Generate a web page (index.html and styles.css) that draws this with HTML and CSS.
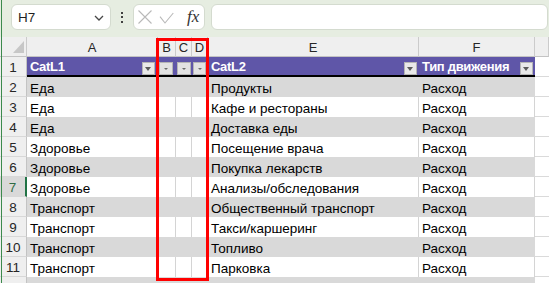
FILE: index.html
```html
<!DOCTYPE html>
<html lang="ru">
<head>
<meta charset="utf-8">
<title>Sheet</title>
<link rel="stylesheet" href="styles.css">
</head>
<body>
<div class="app">
  <div class="toolbar">
    <div class="namebox"><span>H7</span>
      <svg class="chev" width="10" height="6" viewBox="0 0 10 6"><path d="M1 1 L5 5 L9 1" fill="none" stroke="#474747" stroke-width="1.3"/></svg>
    </div>
    <div class="dots"><i></i><i></i><i></i></div>
    <div class="fxbox">
      <svg class="ico-x" width="14" height="14" viewBox="0 0 14 14"><path d="M0.5 0.5 L13.5 13.5 M13.5 0.5 L0.5 13.5" fill="none" stroke="#b9b9b9" stroke-width="1.1"/></svg>
      <svg class="ico-ok" width="15" height="12" viewBox="0 0 15 12"><path d="M1 4.7 L6 11 L14.3 1" fill="none" stroke="#b9b9b9" stroke-width="1.1"/></svg>
      <span class="fx">fx</span>
    </div>
    <div class="formula"></div>
  </div>

  <div class="sheet">
    <div class="row">
      <div class="h corner"></div>
      <div class="h">A</div>
      <div class="h">B</div>
      <div class="h">C</div>
      <div class="h">D</div>
      <div class="h">E</div>
      <div class="h">F</div>
      <div class="h"></div>
    </div>
    <div class="row">
      <div class="rh">1</div>
      <div class="p txt"><span>CatL1</span><span class="fb"></span></div>
      <div class="p narrow"><span class="fb sm"></span></div>
      <div class="p narrow"><span class="fb sm"></span></div>
      <div class="p narrow"><span class="fb sm last"></span></div>
      <div class="p txt"><span>CatL2</span><span class="fb r2"></span></div>
      <div class="p txt"><span>Тип движения</span><span class="fb r2"></span></div>
      <div class="x"></div>
    </div>
    <div class="row band">
      <div class="rh">2</div><div class="t">Еда</div><div class="t"></div><div class="t"></div><div class="t"></div><div class="t">Продукты</div><div class="t f">Расход</div><div class="x"></div>
    </div>
    <div class="row">
      <div class="rh">3</div><div class="t">Еда</div><div class="t"></div><div class="t"></div><div class="t"></div><div class="t">Кафе и рестораны</div><div class="t f">Расход</div><div class="x"></div>
    </div>
    <div class="row band">
      <div class="rh">4</div><div class="t">Еда</div><div class="t"></div><div class="t"></div><div class="t"></div><div class="t">Доставка еды</div><div class="t f">Расход</div><div class="x"></div>
    </div>
    <div class="row">
      <div class="rh">5</div><div class="t">Здоровье</div><div class="t"></div><div class="t"></div><div class="t"></div><div class="t">Посещение врача</div><div class="t f">Расход</div><div class="x"></div>
    </div>
    <div class="row band">
      <div class="rh">6</div><div class="t">Здоровье</div><div class="t"></div><div class="t"></div><div class="t"></div><div class="t">Покупка лекарств</div><div class="t f">Расход</div><div class="x"></div>
    </div>
    <div class="row">
      <div class="rh sel">7</div><div class="t">Здоровье</div><div class="t"></div><div class="t"></div><div class="t"></div><div class="t">Анализы/обследования</div><div class="t f">Расход</div><div class="x"></div>
    </div>
    <div class="row band">
      <div class="rh">8</div><div class="t">Транспорт</div><div class="t"></div><div class="t"></div><div class="t"></div><div class="t">Общественный транспорт</div><div class="t f">Расход</div><div class="x"></div>
    </div>
    <div class="row">
      <div class="rh">9</div><div class="t">Транспорт</div><div class="t"></div><div class="t"></div><div class="t"></div><div class="t">Такси/каршеринг</div><div class="t f">Расход</div><div class="x"></div>
    </div>
    <div class="row band">
      <div class="rh">10</div><div class="t">Транспорт</div><div class="t"></div><div class="t"></div><div class="t"></div><div class="t">Топливо</div><div class="t f">Расход</div><div class="x"></div>
    </div>
    <div class="row">
      <div class="rh">11</div><div class="t">Транспорт</div><div class="t"></div><div class="t"></div><div class="t"></div><div class="t">Парковка</div><div class="t f">Расход</div><div class="x"></div>
    </div>
    <div class="row band">
      <div class="rh"></div><div class="t"></div><div class="t"></div><div class="t"></div><div class="t"></div><div class="t"></div><div class="t f"></div><div class="x"></div>
    </div>
  </div>

  <div class="redbox"></div>
  <div class="edge"></div>
</div>
</body>
</html>
```

FILE: styles.css
```css
* { box-sizing: border-box; }
html, body { margin: 0; padding: 0; }
body {
  width: 549px;
  height: 283px;
  overflow: hidden;
  background: #ffffff;
  font-family: "Liberation Sans", Arial, sans-serif;
}
.app {
  position: relative;
  width: 549px;
  height: 283px;
  overflow: hidden;
}

/* toolbar */
.toolbar {
  height: 37px;
  background: #e6ede1;
  display: flex;
  align-items: flex-start;
  padding: 4px 0 0 11px;
}
.namebox {
  width: 100px;
  height: 26px;
  background: #ffffff;
  border: 1px solid #d4dbcf;
  border-radius: 6px;
  display: flex;
  align-items: center;
  justify-content: space-between;
  padding: 0 6px 0 6px;
  font-size: 13.5px;
  color: #1f1f1f;
}
.chev { margin-top: 1px; }
.dots {
  width: 2px;
  margin: 8px 10px 0 10px;
  display: flex;
  flex-direction: column;
  gap: 2.4px;
}
.dots i {
  display: block;
  width: 2px;
  height: 2px;
  background: #404040;
}
.fxbox {
  width: 72px;
  height: 26px;
  background: #ffffff;
  border: 1px solid #d4dbcf;
  border-radius: 6px;
  display: flex;
  align-items: center;
  padding-left: 4px;
}
.ico-ok { margin-left: 7px; margin-top: 2px; }
.fx {
  margin-left: 13px;
  font-family: "Liberation Serif", "Times New Roman", serif;
  font-style: italic;
  font-size: 17px;
  color: #333333;
  line-height: 1;
  margin-top: -2px;
}
.formula {
  flex: 1;
  height: 26px;
  margin-left: 6px;
  margin-right: 1px;
  background: #ffffff;
  border: 1px solid #d4dbcf;
  border-radius: 6px;
}

/* grid */
.sheet {
  display: grid;
  grid-template-columns: 27px 131px 18px 16px 16px 211px 116px 1fr;
  grid-auto-rows: 20px;
  font-size: 13.5px;
  color: #000000;
}
.row { display: contents; }
.row > div {
  display: flex;
  align-items: flex-end;
  line-height: 16px;
  white-space: nowrap;
  overflow: hidden;
}
.h {
  background: #efefef;
  border-right: 1px solid #cbcbcb;
  border-bottom: 1px solid #c3c3c3;
  justify-content: center;
  font-size: 13px;
  color: #262626;
}
.corner { position: relative; }
.corner::after {
  content: "";
  position: absolute;
  right: 2px;
  bottom: 3px;
  width: 11px;
  height: 12px;
  background: #c7c7c7;
  clip-path: polygon(100% 0, 100% 100%, 0 100%);
}
.rh {
  background: #efefef;
  border-right: 1px solid #c3c3c3;
  border-bottom: 1px solid #d8d8d8;
  justify-content: center;
  color: #262626;
}
.rh.sel {
  background: #d9d9d9;
  color: #2f6b43;
  border-right: 2px solid #217346;
}
.p {
  background: #5f56a8;
  color: #ffffff;
  font-weight: bold;
  border-bottom: 2px solid #000000;
  font-size: 13px;
  letter-spacing: -0.3px;
}
.p.txt { padding-left: 3px; }
.fb {
  position: relative;
  width: 13px;
  height: 13px;
  margin-left: auto;
  margin-right: 3px;
  align-self: flex-end;
  background: #e9e9e9;
  border: 1px solid #b5b5b5;
  flex: none;
}
.fb.r2 { margin-right: 2px; }
.fb::after {
  content: "";
  position: absolute;
  left: 2px;
  top: 4px;
  border-left: 3.5px solid transparent;
  border-right: 3.5px solid transparent;
  border-top: 4px solid #5a5a5a;
}
.fb.sm {
  width: 14px;
  margin-left: 1px;
  margin-right: 0;
  background: #e2e2e2;
}
.fb.sm.last { width: 13px; }
.fb.sm::after {
  left: 4px;
  top: 5px;
  border-left: 2px solid transparent;
  border-right: 2px solid transparent;
  border-top: 2px solid #6a6a6a;
}
.t {
  padding-left: 3px;
  border-right: 1px solid #d4d4d4;
}
.band > .t {
  background: #d9d9d9;
  border-right-color: #d9d9d9;
}
.x {
  border-bottom: 1px solid #dadada;
}

/* overlays */
.redbox {
  position: absolute;
  left: 156px;
  top: 38px;
  width: 53px;
  height: 243px;
  border: 3px solid #ff0000;
}
.edge {
  position: absolute;
  left: 1px;
  top: 0;
  width: 1px;
  height: 283px;
  background: #3c8a4d;
}
```
